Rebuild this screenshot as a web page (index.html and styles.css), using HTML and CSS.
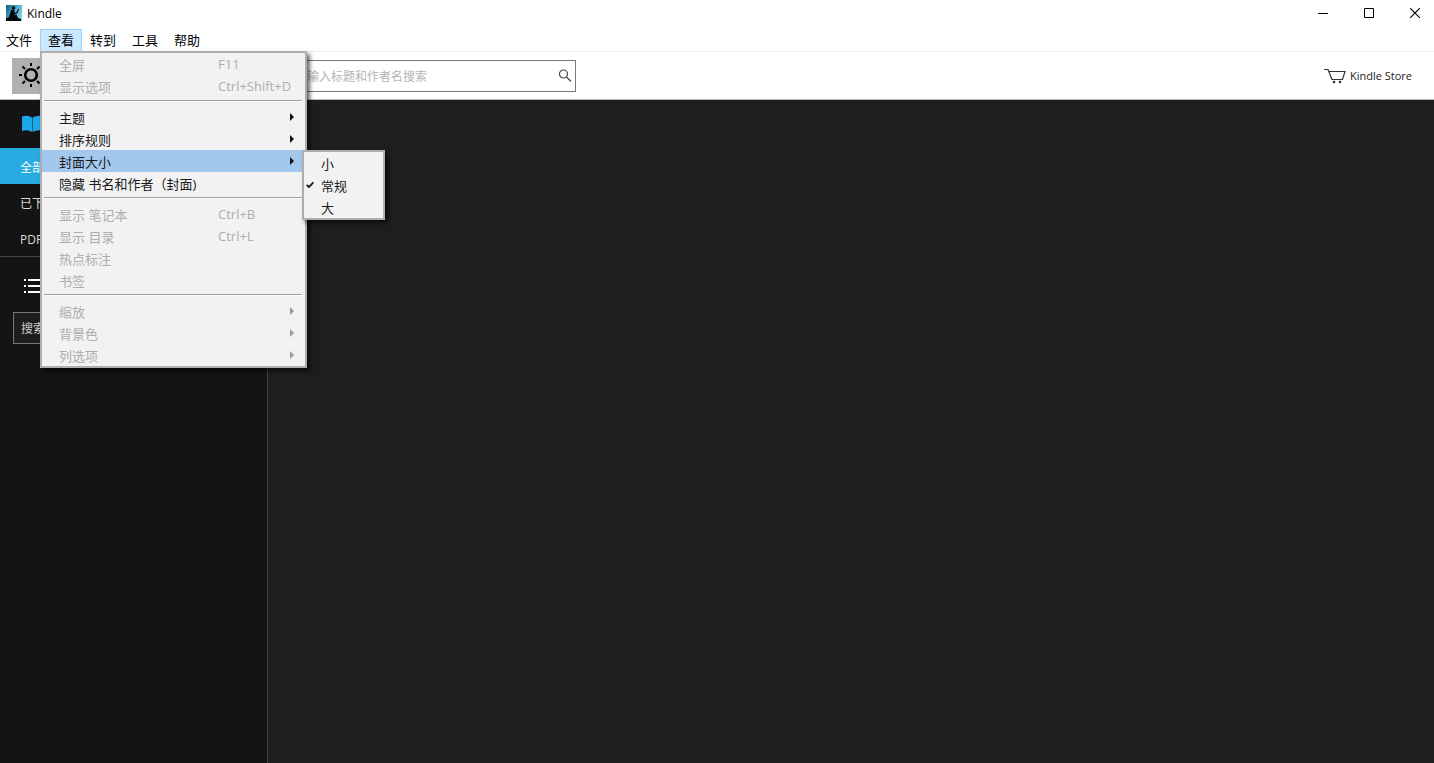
FILE: index.html
```html
<!DOCTYPE html>
<html lang="zh-CN">
<head>
    <meta charset="UTF-8">
    <meta name="viewport" content="width=device-width, initial-scale=1.0">
    <title>Kindle</title>
    <link rel="stylesheet" href="styles.css">
</head>
<body>
    <header class="titlebar">
        <svg class="app-icon" width="16" height="16" viewBox="0 0 16 16">
            <defs>
                <linearGradient id="sky" x1="0" y1="0" x2="1" y2="0.6">
                    <stop offset="0" stop-color="#0f5674"/>
                    <stop offset="0.5" stop-color="#4aa8c8"/>
                    <stop offset="1" stop-color="#7fd0e4"/>
                </linearGradient>
            </defs>
            <rect width="16" height="16" fill="url(#sky)"/>
            <circle cx="7.500" cy="3" r="1.800" fill="#04080c"/>
            <path d="M5 5l3-.5 1 3.500 2-1 .5 1L9 9.500l-1 1 2.500-1L12 13l3 1v2H0v-3l3-1z" fill="#04080c"/>
            <path d="M10.500 7.500l1.500-3.500 1 .3-1.500 3.700z" fill="#04080c"/>
        </svg>
        <span class="app-name">Kindle</span>
        <div class="window-buttons">
            <button type="button" aria-label="最小化">
                <svg width="10" height="10" viewBox="0 0 10 10"><path d="M0 5.5h10" stroke="#000"/></svg>
            </button>
            <button type="button" aria-label="最大化">
                <svg width="10" height="10" viewBox="0 0 10 10"><path d="M.5.5h9v9h-9z" fill="none" stroke="#000"/></svg>
            </button>
            <button type="button" aria-label="关闭">
                <svg width="10" height="10" viewBox="0 0 10 10"><path d="M0 0l10 10M10 0L0 10" stroke="#000" stroke-width="1.1"/></svg>
            </button>
        </div>
    </header>

    <nav class="menubar">
        <div class="menu"><button type="button">文件</button></div>
        <div class="menu open">
            <button type="button">查看</button>
            <!-- 查看菜单 -->
            <div class="dropdown">
                <button type="button" disabled><span>全屏</span><span class="key">F11</span></button>
                <button type="button" disabled><span>显示选项</span><span class="key">Ctrl+Shift+D</span></button>
                <hr>
                <button type="button" class="more"><span>主题</span></button>
                <button type="button" class="more"><span>排序规则</span></button>
                <div class="parent">
                    <button type="button" class="more selected"><span>封面大小</span></button>
                    <div class="dropdown submenu">
                        <button type="button"><span>小</span></button>
                        <button type="button">
                            <svg class="check" width="8" height="8" viewBox="0 0 8 8"><path d="M.7 3.8L3 6 7.3 1.3" fill="none" stroke="#111" stroke-width="1.8"/></svg>
                            <span>常规</span>
                        </button>
                        <button type="button"><span>大</span></button>
                    </div>
                </div>
                <button type="button"><span>隐藏 书名和作者（封面)</span></button>
                <hr>
                <button type="button" disabled><span>显示 笔记本</span><span class="key">Ctrl+B</span></button>
                <button type="button" disabled><span>显示 目录</span><span class="key">Ctrl+L</span></button>
                <button type="button" disabled><span>热点标注</span></button>
                <button type="button" disabled><span>书签</span></button>
                <hr>
                <button type="button" class="more" disabled><span>缩放</span></button>
                <button type="button" class="more" disabled><span>背景色</span></button>
                <button type="button" class="more" disabled><span>列选项</span></button>
            </div>
        </div>
        <div class="menu"><button type="button">转到</button></div>
        <div class="menu"><button type="button">工具</button></div>
        <div class="menu"><button type="button">帮助</button></div>
    </nav>

    <div class="toolbar">
        <button type="button" class="theme" aria-label="主题">
            <svg width="26" height="26" viewBox="0 0 26 26" fill="none" stroke="#000" stroke-width="2">
                <circle cx="13" cy="12" r="5.800" stroke-width="2.600"/>
                <path d="M13 0v3M13 21v3M1 12h3M22 12h3M4.500 3.500l2.500 2.500M19 18l2.500 2.500M4.500 20.500L7 18M19 6l2.500-2.500"/>
            </svg>
        </button>
        <div class="search">
            <input type="text" aria-label="搜索" placeholder="输入标题和作者名搜索">
            <svg width="14" height="14" viewBox="0 0 14 14" fill="none" stroke="#444">
                <circle cx="5.5" cy="5" r="4" stroke-width="1.2"/>
                <path d="M8.5 8l4.5 4.5" stroke-width="1.3"/>
            </svg>
        </div>
        <a href="#" class="store">
            <svg width="22" height="16" viewBox="0 0 22 16" fill="none" stroke="#333">
                <path d="M0 1.500h4L8 11.500h10.500L21 3.500H5" stroke-width="1.200"/>
                <circle cx="10" cy="14" r="1.300" fill="#333" stroke="none"/>
                <circle cx="16" cy="14" r="1.300" fill="#333" stroke="none"/>
            </svg>
            Kindle Store
        </a>
    </div>

    <main class="content">
        <aside class="sidebar">
            <div class="side-head">
                <svg width="22" height="18" viewBox="0 0 22 18" fill="#1ba7e8">
                    <path d="M0 1.500q6-2 10 1v14.500q-4-3-10-1z"/>
                    <path d="M22 1.500q-6-2-11.500 1v14.500q5.500-3 11.500-1z"/>
                </svg>
            </div>
            <a href="#" class="active">全部</a>
            <a href="#">已下载</a>
            <a href="#">PDF</a>
            <div class="side-head collections">
                <svg width="20" height="14" viewBox="0 0 20 14" stroke="#fff" stroke-width="2">
                    <path d="M0 1h2M4 1h16M0 7h2M4 7h16M0 13h2M4 13h16"/>
                </svg>
            </div>
            <input type="text" class="side-search" aria-label="搜索" placeholder="搜索">
        </aside>
        <section class="library"></section>
    </main>
</body>
</html>
```
FILE: styles.css
```css
* {
    box-sizing: border-box;
}

body {
    margin: 0;
    height: 100vh;
    display: flex;
    flex-direction: column;
    background: #fff;
    color: #000;
    font-family: "Open Sans", "Noto Sans CJK SC", sans-serif;
    font-size: 13px;
}

button, input {
    font: inherit;
    color: inherit;
}

button {
    border: none;
    background: none;
    padding: 0;
    cursor: default;
}

a {
    color: inherit;
    text-decoration: none;
}

svg {
    flex: none;
}

/* 标题栏 */
.titlebar {
    display: flex;
    align-items: center;
    height: 26px;
    padding-left: 6px;
    font-size: 12px;
}

.app-name {
    margin-left: 5px;
}

.window-buttons {
    display: flex;
    margin-left: auto;
    margin-right: -4px;
}

.window-buttons button {
    display: flex;
    align-items: center;
    justify-content: center;
    width: 46px;
    height: 26px;
}

/* 菜单 */
.menubar {
    display: flex;
    height: 26px;
    padding-top: 3px;
    border-bottom: 1px solid #f0f0f0;
}

.menu {
    position: relative;
}

.menu > button {
    width: 42px;
    height: 23px;
    line-height: 21px;
    border: 1px solid transparent;
}

.menu:first-child > button {
    width: 40px;
    padding-right: 2px;
}

.menu.open > button {
    background: #cce8ff;
    border-color: #99d1ff;
}

.dropdown {
    position: absolute;
    top: 22px;
    left: 0;
    z-index: 10;
    width: 267px;
    padding-right: 3px;
    border: 2px solid #aeaeae;
    background: #f2f2f2;
    box-shadow: 3px 3px 4px rgba(0, 0, 0, 0.6);
    color: #1a1a1a;
}

.dropdown button {
    display: flex;
    align-items: center;
    width: 100%;
    height: 22px;
    padding: 0 8px 0 17px;
    white-space: nowrap;
}

.dropdown button:disabled {
    color: #adadad;
}

.dropdown .key {
    width: 76px;
    margin-left: auto;
    text-align: left;
}

.dropdown hr {
    height: 2px;
    margin: 3px 0 4px 2px;
    border: none;
    border-top: 1px solid #a0a0a0;
    background: #fff;
}

.more::after {
    content: "";
    margin-left: auto;
    border: 4px solid transparent;
    border-left-color: #111;
    border-right: none;
}

.more:disabled::after {
    border-left-color: #999;
}

.dropdown .selected {
    background: #a3c8ee;
}

.parent {
    position: relative;
}

.submenu {
    top: 0;
    left: 260px;
    width: 83px;
    padding: 0;
}

.check {
    margin: 0 7px 0 -15px;
}

/* 工具栏 */
.toolbar {
    display: flex;
    align-items: center;
    height: 48px;
    padding: 0 22px 0 12px;
    border-bottom: 1px solid #b8b8b8;
    font-size: 12px;
}

.theme {
    display: flex;
    align-items: center;
    justify-content: center;
    width: 38px;
    height: 36px;
    background: #b0b0b0;
}

.search {
    display: flex;
    align-items: center;
    width: 276px;
    height: 32px;
    margin-left: 250px;
    padding: 0 3px 0 6px;
    border: 1px solid #7a7a7a;
}

.search input {
    flex: 1;
    min-width: 0;
    border: none;
    outline: none;
    padding: 1px 0 0;
    background: none;
}

.search input::placeholder {
    color: #b4b4b4;
}

.store {
    display: flex;
    align-items: center;
    gap: 4px;
    margin-left: auto;
    color: #222;
    font-size: 11px;
}

/* 主体 */
.content {
    flex: 1;
    display: flex;
    background: #1e1e1e;
}

.sidebar {
    width: 268px;
    border-right: 1px solid #444;
    background: #141414;
    color: #ddd;
}

.side-head {
    display: flex;
    align-items: center;
    height: 48px;
    padding-left: 22px;
}

.sidebar a {
    display: block;
    height: 36px;
    padding-left: 20px;
    line-height: 39px;
    font-size: 12px;
}

.sidebar .active {
    background: #29abe2;
    color: #fff;
}

.side-head.collections {
    height: 56px;
    padding: 2px 0 0 24px;
    border-top: 1px solid #444;
}

.side-search {
    display: block;
    width: 242px;
    height: 32px;
    margin-left: 13px;
    padding: 0 7px;
    border: 1px solid #777;
    background: #1e1e1e;
    font-size: 12px;
}

.side-search::placeholder {
    color: #ccc;
}

.library {
    flex: 1;
}
```
